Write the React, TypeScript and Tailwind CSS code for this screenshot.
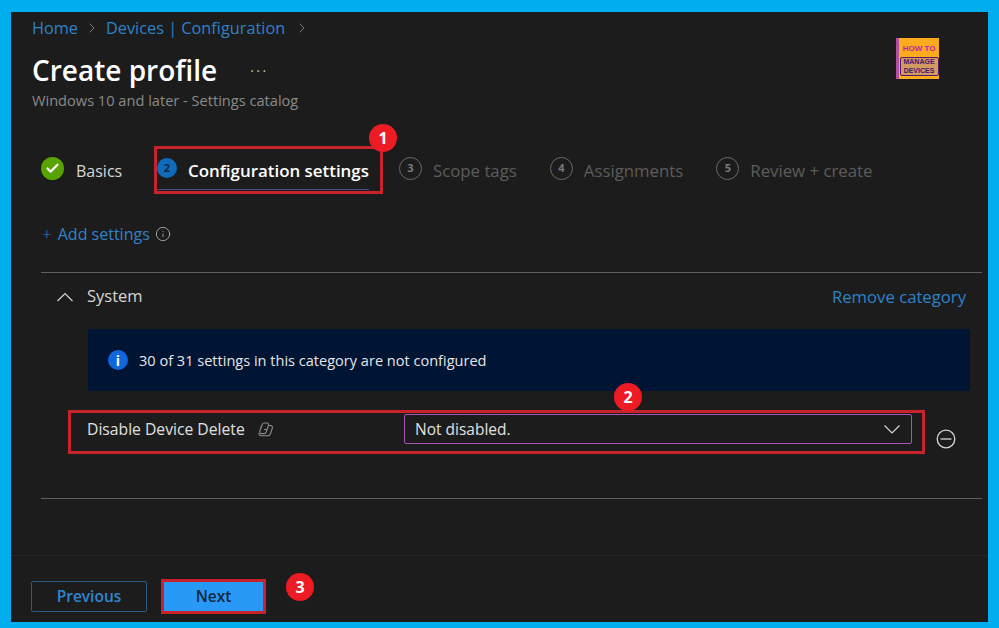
import { Check, ChevronRight, Info } from 'lucide-react';

const Badge = ({ n, className }: { n: number; className: string }) => (
  <span className={`absolute flex h-[28px] w-[28px] items-center justify-center rounded-full bg-[#ed1c24] text-[16px] font-bold text-white ${className}`}>
    {n}
  </span>
);

const Step = ({ n, label, className }: { n: number; label: string; className: string }) => (
  <div className={`flex items-center gap-[11px] ${className}`}>
    <span className="mt-[-3px] flex h-[23px] w-[23px] items-center justify-center rounded-full border border-[#6b6b6b] text-[11px] font-bold text-[#7a7a7a]">
      {n}
    </span>
    <span className="mt-[1px] text-[16.8px] text-[#5c5c5c]">{label}</span>
  </div>
);

const CopilotIcon = () => (
  <svg width="17" height="15" viewBox="0 0 17 15" fill="none" stroke="#8c8c8c" strokeWidth="1.1">
    <path d="M3 8.5 5.2 2.6C5.6 1.6 6.3 1 7.4 1h2.2c1.5 0 2.3 1.2 1.8 2.6L9.2 10c-.4 1-1.1 1.6-2.2 1.6H4.6C3 11.6 2.4 10 3 8.5Z" />
    <path d="M11 3.5h2.4c1.6 0 2.4 1.3 1.9 2.7l-1.9 5.6c-.4 1.1-1.2 1.9-2.4 1.9H4.2c-1.6 0-2.5-1.2-2.2-2.8" />
    <path d="M4.5 5H3.2M10 7.5H7" />
  </svg>
);

export default function App() {
  return (
    <div className="h-[628px] w-[999px] overflow-hidden bg-[#00aeef] pb-[6px] pl-[11px] pr-[11px] pt-[12px] font-['Open_Sans','Noto_Sans',sans-serif]">
      <div className="flex h-full flex-col bg-[#1c1c1c]">
        <div className="flex-1">
          {/* header */}
          <div className="flex justify-between pl-[21px] pr-[49px]">
            <div>
              <div className="flex h-[32px] items-center text-[16.3px] text-[#2f82c8]">
                <span>Home</span>
                <ChevronRight className="mx-[6px] h-[16px] w-[16px] text-[#8a8a8a]" strokeWidth={1.25} />
                <span>Devices | Configuration</span>
                <ChevronRight className="ml-[9px] h-[16px] w-[16px] text-[#8a8a8a]" strokeWidth={1.25} />
              </div>
              <div className="mt-[5px] flex items-center">
                <h1 className="text-[28px] font-semibold leading-[42px] text-white">Create profile</h1>
                <span className="ml-[33px] mt-[2px] text-[14px] leading-none tracking-[2.5px] text-[#bdbdbd]">···</span>
              </div>
              <p className="mt-[-1px] text-[14.6px] leading-[20px] text-[#8a8a8a]">Windows 10 and later - Settings catalog</p>
            </div>
            <div className="mt-[26px] flex h-[41px] w-[43px] flex-col items-center overflow-hidden border-l-[3px] border-[#b050a0] bg-[#fbab1c] font-['Liberation_Sans',sans-serif]">
              <span className="mt-[4px] whitespace-nowrap text-[8px] font-bold leading-[13px] text-[#c01fb0]">HOW TO</span>
              <span className="mt-[2px] w-[39px] rounded-[2px] border border-[#5a1a6a] bg-[#d09a60] text-center">
                <span className="block whitespace-nowrap text-[7px] font-bold leading-[8.5px] text-[#4a1470]">MANAGE</span>
                <span className="block whitespace-nowrap text-[7px] font-bold leading-[8.5px] text-[#4a1470]">DEVICES</span>
              </span>
            </div>
          </div>

          {/* wizard steps */}
          <div className="mt-[36px] flex h-[48px] items-center pl-[30px]">
            <span className="mt-[-3px] flex h-[23px] w-[23px] items-center justify-center rounded-full bg-[#57a300]">
              <Check className="h-[15px] w-[15px] text-white" strokeWidth={3.5} />
            </span>
            <span className="ml-[12px] mt-[1px] w-[48px] text-[16px] text-[#d6d6d6]">Basics</span>
            <div className="relative ml-[30px] flex h-[48px] w-[229px] items-center border-[3px] border-[#c8232c]">
              <div className="flex h-[39px] items-center gap-[11px] border-b border-[#4d4d8f]">
                <span className="mt-[-3px] flex h-[20px] w-[20px] items-center justify-center rounded-full bg-[#0f6cbd] text-[11px] font-bold text-[#10294a]">2</span>
                <span className="mt-[2px] text-[16.9px] font-semibold text-white">Configuration settings</span>
              </div>
              <Badge n={1} className="right-[-17px] top-[-25px]" />
            </div>
            <Step n={3} label="Scope tags" className="ml-[16px]" />
            <Step n={4} label="Assignments" className="ml-[33px]" />
            <Step n={5} label="Review + create" className="ml-[33px]" />
          </div>

          {/* add settings */}
          <div className="mt-[25px] flex h-[30px] items-center pl-[31px] text-[16px] text-[#2f82c8]">
            <span className="text-[17px] font-light">+</span>
            <span className="ml-[6px]">Add settings</span>
            <Info className="ml-[5px] h-[16px] w-[16px] text-[#b5b5b5]" strokeWidth={1.25} />
          </div>

          {/* category */}
          <div className="ml-[30px] mr-[6px] mt-[23px] border-b border-t border-[#5e5e5e] pb-[44px]">
            <div className="flex h-[47px] items-center justify-between pl-[15px] pr-[16px]">
              <div className="flex items-center">
                <svg width="18" height="10" viewBox="0 0 18 10" fill="none" stroke="#d6d6d6" strokeWidth="1.2">
                  <path d="M1.5 9 9 1.5 16.5 9" />
                </svg>
                <span className="ml-[13px] text-[16.5px] text-[#d6d6d6]">System</span>
              </div>
              <span className="text-[16.7px] text-[#2f82c8]">Remove category</span>
            </div>
            <div className="ml-[47px] mr-[12px] mt-[9px] flex h-[62px] items-center rounded-[2px] bg-[#001433] pl-[20px]">
              <span className="flex h-[20px] w-[20px] items-center justify-center rounded-full bg-[#1166dd] text-[14px] font-bold text-white">i</span>
              <span className="ml-[11px] mt-[1px] text-[14.55px] text-[#e6e6e6]">30 of 31 settings in this category are not configured</span>
            </div>
            <div className="mt-[19px] flex items-start">
              <div className="relative ml-[27px] flex h-[44px] w-[857px] items-center border-[3px] border-[#c8232c] pl-[16px] pr-[10px]">
                <div className="mb-[5px] flex w-[317px] items-center">
                  <span className="text-[15.7px] text-[#e0e0e0]">Disable Device Delete</span>
                  <span className="ml-[12px]"><CopilotIcon /></span>
                </div>
                <div className="mb-[6px] flex h-[30px] flex-1 items-center justify-between rounded-[2px] border border-[#a855b5] pl-[10px] pr-[10px]">
                  <span className="mt-[1px] text-[15.5px] text-[#e0e0e0]">Not disabled.</span>
                  <svg width="18" height="10" viewBox="0 0 18 10" fill="none" stroke="#d6d6d6" strokeWidth="1.2">
                    <path d="M1.5 1.5 9 9l7.5-7.5" />
                  </svg>
                </div>
                <Badge n={2} className="left-[543px] top-[-30px]" />
              </div>
              <svg className="ml-[11px] mt-[19px]" width="20" height="20" viewBox="0 0 20 20" fill="none" stroke="#d6d6d6" strokeWidth="1.3">
                <circle cx="10" cy="10" r="8.8" />
                <path d="M4.5 10h11" />
              </svg>
            </div>
          </div>
        </div>

        {/* footer */}
        <div className="flex h-[67px] border-t border-[#272727] pl-[20px] pt-[23px]">
          <button className="mt-[2px] h-[31px] w-[116px] rounded-[2px] border border-[#2a5c85] text-[15.5px] font-semibold text-[#2f86d0]">
            Previous
          </button>
          <div className="relative ml-[14px]">
            <button className="h-[35px] w-[105px] border-[3px] border-[#c8232c] bg-[#2899f5] text-[15.5px] font-semibold text-[#10263f]">
              Next
            </button>
            <Badge n={3} className="left-[125px] top-[-6px]" />
          </div>
        </div>
      </div>
    </div>
  );
}
